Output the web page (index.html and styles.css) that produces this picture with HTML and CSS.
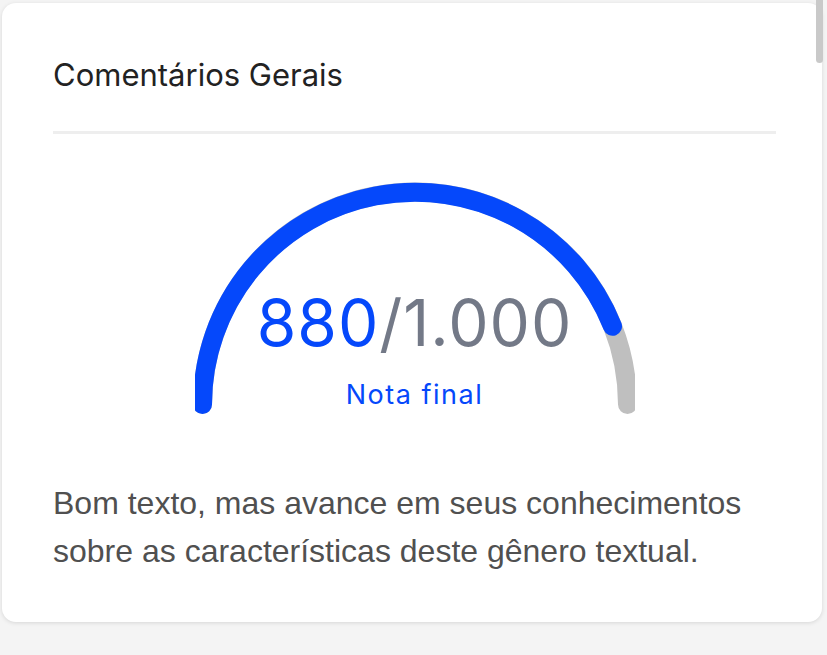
FILE: index.html
```html
<!DOCTYPE html>
<html lang="pt-BR">
<head>
<meta charset="utf-8">
<title>Comentários Gerais</title>
<link rel="stylesheet" href="styles.css">
</head>
<body>
<div class="card">
  <h2 class="title">Comentários Gerais</h2>
  <hr class="divider">
  <div class="gauge">
    <svg class="gauge-svg" width="440" height="238" viewBox="0 0 440 238">
      <path d="M 7.5 225.5 A 212.5 212.5 0 0 1 432.5 225.5" fill="none" stroke="#bfbfbf" stroke-width="19" stroke-linecap="round"/>
      <path d="M 7.5 225.5 A 212.5 212.5 0 0 1 417.5 147.3" fill="none" stroke="#0548fb" stroke-width="19" stroke-linecap="round"/>
    </svg>
    <div class="gauge-text">
      <div class="score"><span class="score-value">880</span><span class="score-total">/1.000</span></div>
      <div class="score-label">Nota final</div>
    </div>
  </div>
  <p class="comment">Bom texto, mas avance em seus conhecimentos sobre as características deste gênero textual.</p>
</div>
<div class="scroll-thumb"></div>
</body>
</html>
```

FILE: styles.css
```css
html, body {
  margin: 0;
  padding: 0;
}
body {
  background: #f4f4f4;
  width: 827px;
  height: 655px;
  overflow: hidden;
  position: relative;
}
.card {
  box-sizing: border-box;
  margin: 3px 0 0 2px;
  width: 820px;
  height: 619px;
  background: #ffffff;
  border-radius: 14px;
  box-shadow: 0 1px 4px rgba(0, 0, 0, 0.12);
  padding: 54px 46px 0 51px;
  display: flex;
  flex-direction: column;
}
.title {
  margin: 0;
  font-family: Inter, "Noto Sans", sans-serif;
  font-weight: 400;
  font-size: 31px;
  line-height: 36px;
  color: #222222;
}
.divider {
  margin: 38px 0 0 0;
  border: 0;
  height: 3px;
  background: #eeeeee;
}
.gauge {
  margin: 45px auto 0 auto;
  width: 440px;
  height: 238px;
  display: grid;
}
.gauge-svg {
  grid-area: 1 / 1;
  display: block;
}
.gauge-text {
  grid-area: 1 / 1;
  align-self: end;
  display: flex;
  flex-direction: column;
  align-items: center;
  padding-bottom: 7px;
  font-family: Inter, "Noto Sans", sans-serif;
}
.score {
  font-size: 64px;
  line-height: 64px;
  letter-spacing: 1px;
  margin-bottom: 25px;
}
.score-value {
  color: #0548fb;
}
.score-total {
  color: #737987;
}
.score-label {
  font-size: 27px;
  line-height: 30px;
  letter-spacing: 1.5px;
  color: #0548fb;
}
.comment {
  margin: 62px 0 0 0;
  font-family: "Liberation Sans", Arial, sans-serif;
  font-size: 32px;
  line-height: 48px;
  color: #505050;
}
.scroll-thumb {
  position: absolute;
  left: 816px;
  top: 0;
  width: 7px;
  height: 63px;
  border-radius: 0 0 4px 4px;
  background: #c9c9c9;
}
```
